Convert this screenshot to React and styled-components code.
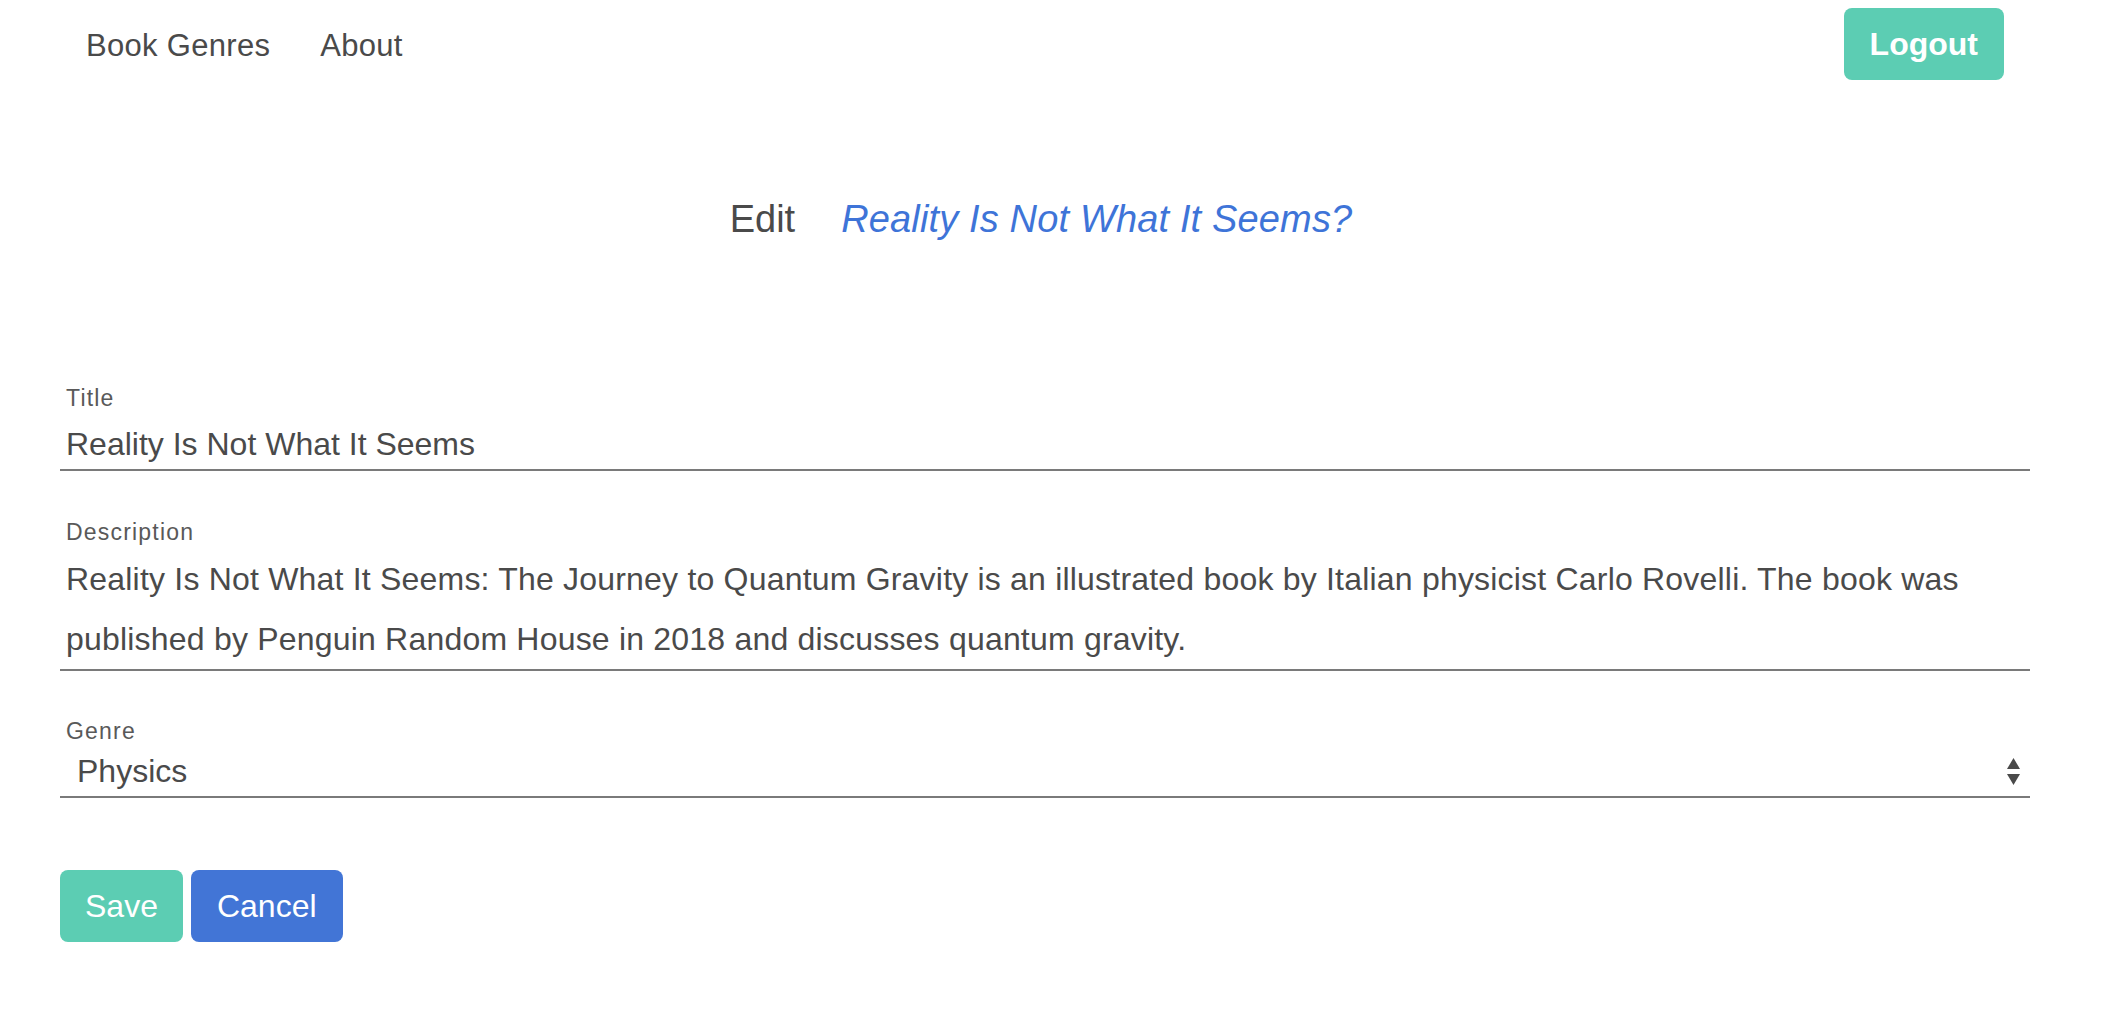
import React from "react";
import styled, { createGlobalStyle } from "styled-components";

const GlobalStyle = createGlobalStyle`
  html, body {
    margin: 0;
    padding: 0;
    background: #ffffff;
  }
  body {
    font-family: "Liberation Sans", Arial, sans-serif;
    color: #4a4a4a;
  }
  * { box-sizing: border-box; }
`;

const NavBar = styled.nav`
  display: flex;
  align-items: center;
  justify-content: space-between;
  height: 88px;
  padding: 0 102px 0 86px;
`;

const NavLinks = styled.div`
  display: flex;
  align-items: center;
  gap: 50px;
  padding-top: 3px;
`;

const NavLink = styled.a`
  font-size: 31px;
  letter-spacing: 0.3px;
  color: #4a4a4a;
  text-decoration: none;
  cursor: pointer;
`;

const Button = styled.button`
  height: 72px;
  border: none;
  border-radius: 8px;
  color: #ffffff;
  font-family: "Liberation Sans", Arial, sans-serif;
  font-size: 32px;
  font-weight: ${(p) => (p.$bold ? 700 : 400)};
  padding: 0 ${(p) => p.$px || 25}px;
  background: ${(p) => (p.$variant === "link" ? "#4275d6" : "#5ccdb3")};
  cursor: pointer;
`;

const Main = styled.main`
  padding: 0 76px 0 60px;
`;

const Heading = styled.h1`
  display: flex;
  justify-content: center;
  align-items: baseline;
  gap: 46px;
  margin: 108px 0 0;
  padding-right: 8px;
  font-size: 38px;
  line-height: 46px;
  font-weight: 400;
  color: #4a4a4a;
`;

const BookName = styled.span`
  font-style: italic;
  letter-spacing: 0.15px;
  color: #3e74d8;
`;

const Form = styled.form`
  display: flex;
  flex-direction: column;
  margin-top: 142px;
`;

const Field = styled.div`
  display: flex;
  flex-direction: column;
  margin-bottom: ${(p) => p.$mb || 0}px;
`;

const Label = styled.label`
  font-size: 23px;
  line-height: 28px;
  letter-spacing: 1.2px;
  padding-left: 6px;
  color: #595959;
`;

const TextInput = styled.input`
  box-sizing: content-box;
  height: 38px;
  margin-top: 7px;
  padding: 6px 6px 6px;
  border: none;
  border-bottom: 2px solid #7a7a7a;
  outline: none;
  font-family: "Liberation Sans", Arial, sans-serif;
  font-size: 32px;
  line-height: 38px;
  color: #4a4a4a;
  background: transparent;
`;

const TextArea = styled.textarea`
  box-sizing: content-box;
  height: 120px;
  padding: 3px 6px 0;
  border: none;
  border-bottom: 2px solid #7a7a7a;
  outline: none;
  resize: none;
  overflow: hidden;
  font-family: "Liberation Sans", Arial, sans-serif;
  font-size: 32px;
  line-height: 60px;
  letter-spacing: 0.2px;
  color: #4a4a4a;
  background: transparent;
`;

const SelectWrap = styled.div`
  position: relative;
`;

const Select = styled.select`
  appearance: none;
  -webkit-appearance: none;
  width: 100%;
  height: 53px;
  padding: 0 40px 0 17px;
  border: none;
  border-bottom: 2px solid #7a7a7a;
  border-radius: 0;
  outline: none;
  font-family: "Liberation Sans", Arial, sans-serif;
  font-size: 32px;
  color: #4a4a4a;
  background: transparent;
`;

const Arrows = styled.svg`
  position: absolute;
  right: 10px;
  top: 13px;
  pointer-events: none;
`;

const ButtonRow = styled.div`
  display: flex;
  gap: 8px;
  margin-top: 72px;
`;

const description =
  "Reality Is Not What It Seems: The Journey to Quantum Gravity is an illustrated book by Italian physicist Carlo Rovelli. The book was published by Penguin Random House in 2018 and discusses quantum gravity.";

export default function App() {
  return (
    <>
      <GlobalStyle />
      <NavBar>
        <NavLinks>
          <NavLink>Book Genres</NavLink>
          <NavLink>About</NavLink>
        </NavLinks>
        <Button $bold $px={26}>Logout</Button>
      </NavBar>
      <Main>
        <Heading>
          <span>Edit</span>
          <BookName>Reality Is Not What It Seems?</BookName>
        </Heading>
        <Form onSubmit={(e) => e.preventDefault()}>
          <Field $mb={47}>
            <Label>Title</Label>
            <TextInput type="text" defaultValue="Reality Is Not What It Seems" />
          </Field>
          <Field $mb={46}>
            <Label>Description</Label>
            <TextArea defaultValue={description} />
          </Field>
          <Field>
            <Label>Genre</Label>
            <SelectWrap>
              <Select defaultValue="Physics">
                <option>Physics</option>
                <option>Philosophy</option>
                <option>History</option>
              </Select>
              <Arrows width="13" height="27" viewBox="0 0 13 27">
                <polygon points="6.5,0 13,11 0,11" fill="#4a4a4a" />
                <polygon points="0,16 13,16 6.5,27" fill="#4a4a4a" />
              </Arrows>
            </SelectWrap>
          </Field>
          <ButtonRow>
            <Button type="submit" $px={25}>Save</Button>
            <Button type="button" $variant="link" $px={26}>Cancel</Button>
          </ButtonRow>
        </Form>
      </Main>
    </>
  );
}
